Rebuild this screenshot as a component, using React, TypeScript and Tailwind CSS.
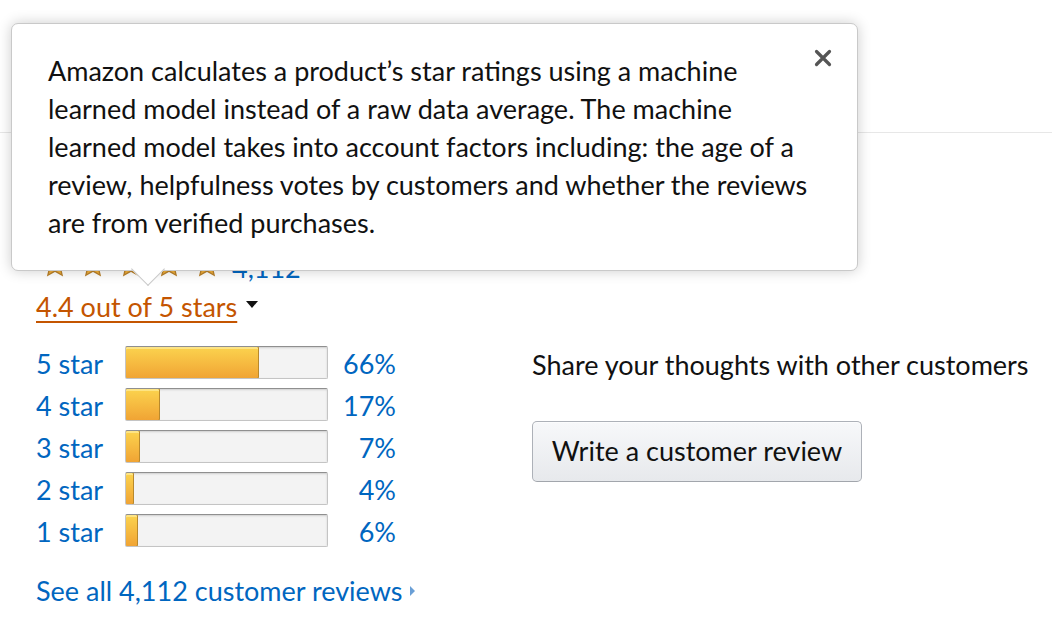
import { useState } from "react";

const rows = [
  { label: "5 star", pct: 66 },
  { label: "4 star", pct: 17 },
  { label: "3 star", pct: 7 },
  { label: "2 star", pct: 4 },
  { label: "1 star", pct: 6 },
];

const Star = () => (
  <svg width="26" height="26" viewBox="0 0 24 24">
    <path
      d="M12 1.5l3.1 6.9 7.4.7-5.6 5 1.7 7.4L12 17.6l-6.6 3.9 1.7-7.4-5.6-5 7.4-.7z"
      fill="#f4b13a"
      stroke="#b9812a"
      strokeWidth="1.2"
    />
  </svg>
);

const App = () => {
  const [open, setOpen] = useState<boolean>(true);

  return (
    <div className="relative w-[1052px] h-[638px] bg-white overflow-hidden font-['Lato','Noto_Sans',sans-serif] text-[27px] text-[#111]">
      <div className="h-[133px] border-b border-[#e7e7e7]"></div>

      <div className="pl-[36px]">
        <div className="flex items-end gap-[12px] h-[145px]">
          <div className="flex gap-[12px] pl-[6px]">
            <Star />
            <Star />
            <Star />
            <Star />
            <Star />
          </div>
          <span className="text-[#0066c0] leading-[30px] -mb-[5px]">4,112</span>
        </div>

        <div className="flex items-center gap-[9px] h-[38px] mt-[10px]">
          <a className="text-[#c45500] underline underline-offset-[4px] decoration-[2px]">4.4 out of 5 stars</a>
          <span className="w-0 h-0 border-l-[6px] border-r-[6px] border-t-[7px] border-l-transparent border-r-transparent border-t-[#111] -mt-[6px]"></span>
        </div>

        <div className="flex mt-[20px]">
          <div className="flex flex-col gap-[9px] w-[496px]">
            {rows.map((r) => (
              <div key={r.label} className="flex items-center h-[33px]">
                <span className="w-[89px] text-[#0066c0] mt-[4px]">{r.label}</span>
                <div className="w-[203px] h-[33px] rounded-[2px] border border-[#c4c4c4] border-t-[#8f8f8f] bg-[#f3f3f3] shadow-[inset_0_1px_2px_rgba(0,0,0,0.15)] overflow-hidden">
                  <div
                    className="h-full rounded-[2px] border border-[#b8892c] bg-gradient-to-b from-[#fbd34e] to-[#f0a434] shadow-[inset_0_2px_0_rgba(255,240,170,0.6)] -m-[1px] box-content"
                    style={{ width: `calc(${r.pct}% - 1px)` }}
                  ></div>
                </div>
                <span className="w-[68px] text-right text-[#0066c0] mt-[4px]">{r.pct}%</span>
              </div>
            ))}
          </div>

          <div className="flex flex-col">
            <p className="leading-[38px]">Share your thoughts with other customers</p>
            <button className="mt-[37px] w-[330px] h-[61px] rounded-[5px] border border-[#adb1b8] border-b-[#a2a6ac] bg-gradient-to-b from-[#f7f8fa] to-[#e7e9ec] text-[#111] text-[27px] shadow-[inset_0_1px_0_rgba(255,255,255,0.6)]">
              Write a customer review
            </button>
          </div>
        </div>

        <div className="flex items-center gap-[7px] mt-[24px]">
          <a className="text-[#0066c0]">See all 4,112 customer reviews</a>
          <span className="w-0 h-0 border-t-[5px] border-b-[5px] border-l-[5px] border-t-transparent border-b-transparent border-l-[#6a9fd6]"></span>
        </div>
      </div>

      {open && (
        <div className="absolute left-[11px] top-[23px] w-[847px] h-[248px] bg-white border border-[#c9c9c9] rounded-[7px] shadow-[0_0_14px_rgba(0,0,0,0.2)]">
          <div className="pl-[36px] pt-[28px] leading-[38px] text-[#111] w-[810px]">
            Amazon calculates a product’s star ratings using a machine learned model instead of a raw data average. The machine learned model takes into account factors including: the age of a review, helpfulness votes by customers and whether the reviews are from verified purchases.
          </div>
          <button onClick={() => setOpen(false)} className="absolute right-[24px] top-[24px] w-[20px] h-[20px]">
            <svg width="20" height="20" viewBox="0 0 20 20">
              <path d="M3.5 3.5l13 13M16.5 3.5l-13 13" stroke="#555" strokeWidth="3.2" strokeLinecap="round" />
            </svg>
          </button>
          <div className="absolute left-[124px] -bottom-[11px] w-[24px] h-[24px] bg-white border-r border-b border-[#c9c9c9] rotate-45"></div>
        </div>
      )}
    </div>
  );
};

export default App;
